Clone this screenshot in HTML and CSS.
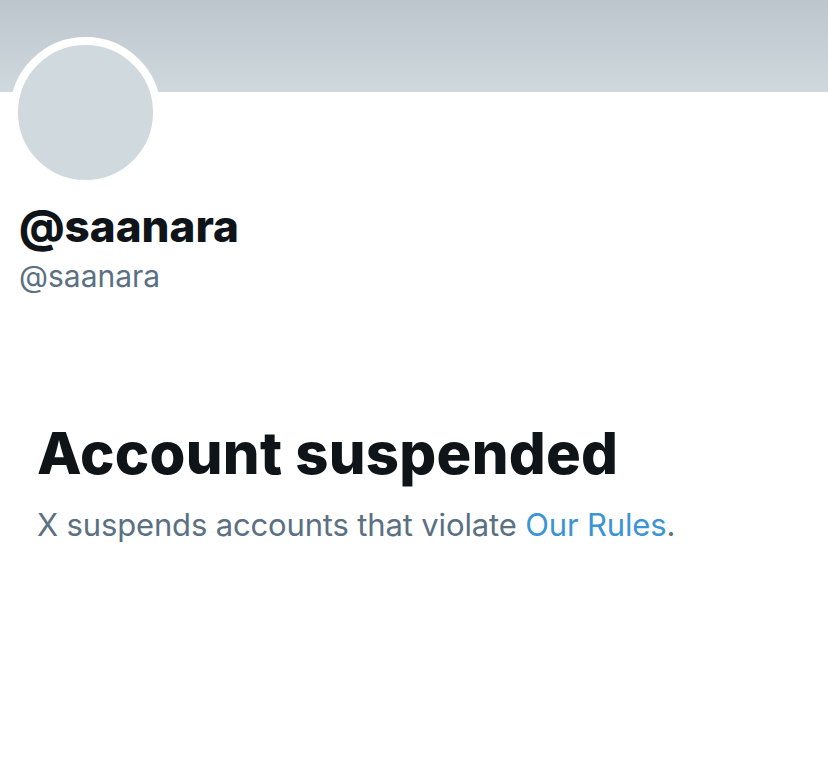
FILE: index.html
```html
<!DOCTYPE html>
<html lang="en">
<head>
<meta charset="utf-8">
<title>@saanara</title>
<link rel="stylesheet" href="styles.css">
</head>
<body>
<div class="page">
  <div class="banner"></div>
  <div class="profile">
    <div class="avatar"></div>
    <div class="names">
      <div class="display-name">@saanara</div>
      <div class="handle">@saanara</div>
    </div>
  </div>
  <div class="notice">
    <h1 class="notice-title">Account suspended</h1>
    <p class="notice-text">X suspends accounts that violate <a class="link" href="#">Our Rules</a>.</p>
  </div>
</div>
</body>
</html>
```

FILE: styles.css
```css
html, body {
  margin: 0;
  padding: 0;
  background: #ffffff;
}
body {
  font-family: Inter, "Noto Sans", "Liberation Sans", sans-serif;
  color: #0f1419;
}
.page {
  width: 828px;
  height: 769px;
  overflow: hidden;
}
.banner {
  height: 92px;
  background: linear-gradient(180deg, #bdc6cd 0%, #cfd8dd 100%);
}
.profile {
  padding-left: 10px;
}
.avatar {
  width: 135px;
  height: 135px;
  border-radius: 50%;
  background: #d0d9de;
  border: 8px solid #ffffff;
  margin-top: -55px;
}
.names {
  padding-left: 9px;
  margin-top: 12px;
}
.display-name {
  font-size: 44px;
  font-weight: 800;
  line-height: 52px;
  color: #0f1419;
}
.handle {
  margin-top: 6px;
  font-size: 30px;
  font-weight: 400;
  line-height: 36px;
  color: #5b7083;
}
.notice {
  padding: 124px 0 0 37px;
}
.notice-title {
  margin: 0;
  font-size: 58px;
  font-weight: 800;
  line-height: 70px;
  letter-spacing: 0.25px;
  color: #0f1419;
}
.notice-text {
  margin: 18px 0 0 0;
  font-size: 31px;
  line-height: 38px;
  letter-spacing: -0.15px;
  color: #5b7083;
}
.link {
  color: #3b94d4;
  text-decoration: none;
}
```
